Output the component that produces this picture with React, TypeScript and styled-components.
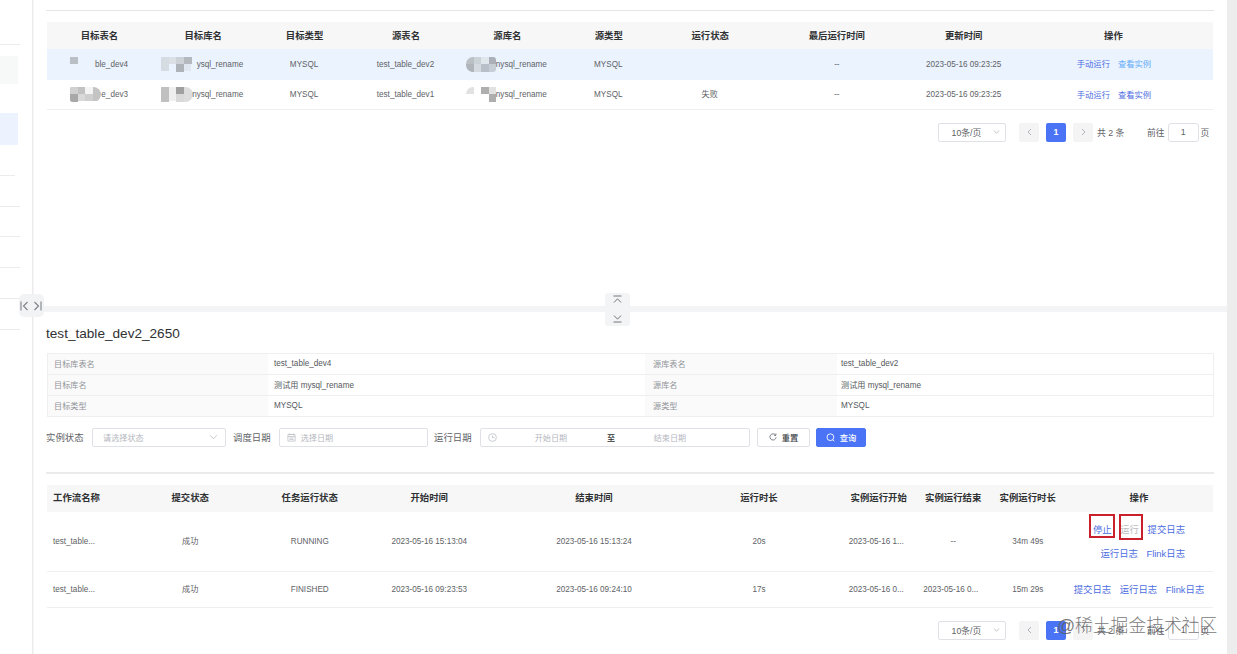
import React from "react";
import styled, { createGlobalStyle, css } from "styled-components";

const Global = createGlobalStyle`
  *, *::before, *::after { box-sizing: border-box; }
  body { margin: 0; background: #fff; overflow: hidden; }
  #root { font-family: "Liberation Sans", "Noto Sans CJK SC", sans-serif; font-size: 8.15px; color: #606266; }
`;

const Page = styled.div`
  position: relative;
  display: flex;
  width: 1237px;
  height: 654px;
  overflow: hidden;
`;
const Sidebar = styled.aside`
  flex: 0 0 32px;
  padding-top: 45px;
`;
const SideItem = styled.div<{ $h: number; $w?: number; $bg?: string; $mt?: number }>`
  height: ${(p) => p.$h}px;
  width: ${(p) => p.$w ?? 20}px;
  margin-top: ${(p) => p.$mt ?? 0}px;
  background: ${(p) => p.$bg ?? "transparent"};
  ${(p) => !p.$bg && css`border-bottom: 1px solid #ececee;`}
`;
const SideDivider = styled.div`
  flex: 0 0 2px;
  background: linear-gradient(90deg, #ebebed 50%, #f6f6f7 50%);
`;
const Main = styled.main`
  flex: 1;
  display: flex;
  flex-direction: column;
`;
const Gutter = styled.div`
  flex: 0 0 10px;
  background: #ededed;
`;
const TopPanel = styled.section`
  height: 306px;
  padding: 10px 13px 0 13px;
`;
const BottomPanel = styled.section`
  flex: 1;
  padding: 0 13px 0 13px;
`;
const Rule = styled.div<{ $h: number }>`
  height: ${(p) => p.$h}px;
  background: ${(p) => (p.$h > 1 ? "#ebebeb" : "#e4e5e6")};
  margin-left: -1px;
`;
const Splitter = styled.div`
  height: 6px;
  background: #f3f4f5;
`;
const SideHandle = styled.div`
  position: absolute;
  left: 19px;
  top: 294px;
  width: 25px;
  height: 23px;
  display: flex;
  align-items: center;
  justify-content: space-between;
  padding: 0 2px 0 1px;
  background: #f1f3f5;
  border-radius: 5px;
`;
const MidHandle = styled.div`
  position: absolute;
  left: 605px;
  top: 293px;
  width: 25px;
  height: 33px;
  display: flex;
  flex-direction: column;
  align-items: center;
  justify-content: space-between;
  padding: 2px 0 3px;
  background: #f3f4f5;
  border-radius: 3px;
`;

const Table = styled.div<{ $cols: string; $mt: number }>`
  display: grid;
  grid-template-columns: ${(p) => p.$cols};
  width: 1166px;
  margin-top: ${(p) => p.$mt}px;
`;
const Head = styled.div<{ $left?: boolean; $lift: number; $nudge?: number }>`
  height: 27px;
  display: flex;
  align-items: center;
  justify-content: ${(p) => (p.$left ? "flex-start" : "center")};
  padding: 0 ${(p) => p.$nudge ?? 0}px ${(p) => p.$lift}px ${(p) => (p.$left ? 6 : 0)}px;
  background: #f7f7f8;
  color: #303133;
  font-weight: 700;
  font-size: 9.4px;
  white-space: nowrap;
`;
const Cell = styled.div<{ $h: number; $active?: boolean; $left?: boolean; $nudge?: number; $lift?: number }>`
  height: ${(p) => p.$h}px;
  display: flex;
  align-items: center;
  justify-content: ${(p) => (p.$left ? "flex-start" : "center")};
  padding-left: ${(p) => (p.$left ? 6 : 0)}px;
  padding-right: ${(p) => p.$nudge ?? 0}px;
  padding-bottom: ${(p) => p.$lift ?? 0}px;
  background: ${(p) => (p.$active ? "#ebf3fe" : "#fff")};
  border-bottom: 1px solid ${(p) => (p.$active ? "#ebf3fe" : "#efeff1")};
  white-space: nowrap;
`;
const Clear = styled.span<{ $w: number }>`
  width: ${(p) => p.$w}px;
  display: flex;
  justify-content: flex-end;
`;
const Link = styled.a<{ $tone?: "hover" | "off" }>`
  color: ${(p) => (p.$tone === "hover" ? "#62acf8" : p.$tone === "off" ? "#b9bbc0" : "#4c6ce0")};
`;
const Links = styled.div<{ $size: number; $gap?: number }>`
  display: flex;
  gap: ${(p) => p.$gap ?? 8}px;
  font-size: ${(p) => p.$size}px;
`;
const StackedLinks = styled.div`
  display: flex;
  flex-direction: column;
  align-items: flex-end;
  gap: 3px;
  padding-bottom: 1px;
`;
const LinkLine = styled.div<{ $gap: number }>`
  height: 21px;
  display: flex;
  align-items: center;
  gap: ${(p) => p.$gap}px;
  font-size: 9.4px;
`;
const Marked = styled.span<{ $w: number; $h: number; $x: number }>`
  position: relative;
  &::after {
    content: "";
    position: absolute;
    left: ${(p) => p.$x}px;
    top: -8px;
    width: ${(p) => p.$w}px;
    height: ${(p) => p.$h}px;
    border: 2.5px solid #c9202c;
  }
`;

const Pager = styled.div<{ $mt: number }>`
  display: flex;
  align-items: center;
  width: 1166px;
  height: 20px;
  margin-top: ${(p) => p.$mt}px;
  padding-left: 891px;
  font-size: 8.8px;
  white-space: nowrap;
`;
const SizeSelect = styled.div`
  width: 68px;
  height: 19px;
  display: flex;
  align-items: center;
  justify-content: space-between;
  padding: 0 5px 0 12.5px;
  border: 1px solid #dfe1e6;
  border-radius: 2px;
  margin-right: 13px;
`;
const PageBtn = styled.div<{ $on?: boolean }>`
  width: 20px;
  height: 19px;
  margin-right: 7px;
  display: flex;
  align-items: center;
  justify-content: center;
  border-radius: 2px;
  background: ${(p) => (p.$on ? "#4a74f5" : "#f4f4f5")};
  color: #fff;
  font-weight: 700;
`;
const Total = styled.span`
  width: 50px;
  margin-left: -3px;
`;
const Jump = styled.div`
  width: 31px;
  height: 19px;
  margin: 0 2px 0 3px;
  display: flex;
  align-items: center;
  justify-content: center;
  border: 1px solid #dfe1e6;
  border-radius: 3px;
`;

const Title = styled.h2`
  margin: 0;
  padding-top: 13px;
  height: 41px;
  margin-left: -1px;
  font-size: 13.6px;
  line-height: 17px;
  font-weight: 400;
  color: #303133;
`;
const Info = styled.div`
  display: grid;
  grid-template-columns: 220px 377px 192px 376px;
  width: 1167px;
  border: 1px solid #efeff1;
  border-bottom: 0;
`;
const InfoCell = styled.div<{ $label?: boolean; $pl: number }>`
  height: 21px;
  display: flex;
  align-items: center;
  padding-left: ${(p) => p.$pl}px;
  padding-bottom: 2px;
  background: ${(p) => (p.$label ? "#fafafa" : "#fff")};
  color: ${(p) => (p.$label ? "#909399" : "#55585d")};
  border-bottom: 1px solid #efeff1;
`;
const Filters = styled.div`
  display: flex;
  align-items: center;
  height: 19px;
  margin: 11px 0 25px -1px;
  white-space: nowrap;
`;
const FieldLabel = styled.label<{ $w: number }>`
  width: ${(p) => p.$w}px;
  padding-bottom: 2px;
  font-size: 9.4px;
`;
const Field = styled.div<{ $w: number; $mr: number; $pl: number }>`
  width: ${(p) => p.$w}px;
  height: 19px;
  margin-right: ${(p) => p.$mr}px;
  padding: 0 7px 1px ${(p) => p.$pl}px;
  display: flex;
  align-items: center;
  border: 1px solid #dfe1e6;
  border-radius: 2px;
  color: #b4b7be;
  svg { flex: none; }
`;
const Grow = styled.span`
  flex: 1;
`;
const RangePart = styled.span<{ $w: number; $dark?: boolean }>`
  width: ${(p) => p.$w}px;
  text-align: center;
  ${(p) => p.$dark && css`color: #303133; font-weight: 500;`}
`;
const Button = styled.button<{ $primary?: boolean; $w: number }>`
  width: ${(p) => p.$w}px;
  height: 19px;
  margin-right: 6px;
  padding: 0 0 1px;
  display: flex;
  align-items: center;
  justify-content: center;
  gap: 5px;
  font: 500 8.3px "Liberation Sans", "Noto Sans CJK SC", sans-serif;
  border-radius: 2px;
  border: 1px solid ${(p) => (p.$primary ? "#4a74f5" : "#dfe1e6")};
  background: ${(p) => (p.$primary ? "#4a74f5" : "#fff")};
  color: ${(p) => (p.$primary ? "#fff" : "#404247")};
`;
const Watermark = styled.div`
  position: absolute;
  left: 1057px;
  top: 614px;
  font: 300 17.8px/24px "Liberation Sans", "Noto Sans CJK SC", sans-serif;
  color: rgba(95, 95, 98, 0.85);
  white-space: nowrap;
`;

const Stroke = ({ d, w, h, color = "#b4b7be", sw = 1 }: { d: string; w: number; h: number; color?: string; sw?: number }) => (
  <svg width={w} height={h} viewBox={`0 0 ${w} ${h}`} fill="none" stroke={color} strokeWidth={sw}>
    <path d={d} />
  </svg>
);

type Block = [number, number, number, number, string];
const MosaicBox = styled.svg<{ $r: string }>`
  flex: none;
  border-radius: ${(p) => p.$r};
`;
const Mosaic = ({ blocks, w, r = "0" }: { blocks: Block[]; w: number; r?: string }) => (
  <MosaicBox width={w} height={15} viewBox={`0 0 ${w} 15`} $r={r}>
    {blocks.map(([x, y, bw, bh, c], i) => (
      <rect key={i} x={x} y={y} width={bw} height={bh} fill={c} />
    ))}
  </MosaicBox>
);

const masks: Record<string, { w: number; r?: string; blocks: Block[] }> = {
  a1: { w: 22, blocks: [[0, 0, 8, 7, "#b9bfc5"]] },
  b1: { w: 32, blocks: [[0, 0, 8, 14, "#d6dce2"], [8, 0, 7, 7, "#dae0e6"], [15, 0, 8, 7, "#ccd2d8"], [15, 7, 8, 8, "#adb3b9"], [23, 0, 8, 7, "#b3b9bf"], [23, 7, 7, 7, "#e0e7ee"]] },
  c1: { w: 30, r: "7px 3px 3px 7px", blocks: [[0, 0, 8, 7, "#bbc0c5"], [0, 7, 8, 8, "#b0b5bb"], [8, 0, 7, 7, "#ccd3d7"], [8, 7, 7, 8, "#d4dae0"], [15, 0, 8, 7, "#dfe6ec"], [15, 7, 8, 8, "#b9bfc8"], [23, 0, 7, 7, "#abb0b8"], [23, 7, 7, 8, "#c8ced5"]] },
  a2: { w: 31, r: "2px 12px 12px 4px", blocks: [[0, 0, 8, 7, "#d0d0d0"], [0, 7, 8, 8, "#a8a8a8"], [8, 0, 7, 7, "#c2c2c2"], [8, 7, 7, 7, "#d9d9d9"], [15, 0, 8, 7, "#f5f5f5"], [15, 7, 8, 7, "#cfcfcf"], [23, 0, 8, 14, "#c4c4c4"]] },
  b2: { w: 32, r: "0 8px 8px 0", blocks: [[0, 0, 8, 15, "#c0c0c0"], [8, 0, 7, 14, "#efefef"], [15, 0, 8, 7, "#a0a0a0"], [15, 7, 8, 8, "#d9d9d9"], [23, 0, 9, 15, "#dddddd"]] },
  c2: { w: 30, r: "7px 0 0 0", blocks: [[0, 0, 8, 7, "#e2e2e2"], [15, 0, 8, 7, "#afafaf"], [23, 0, 7, 7, "#e2e2e2"], [23, 7, 7, 8, "#aeaeae"]] },
};
const Masked = ({ id, w, children }: { id: string; w: number; children: string }) => (
  <>
    <Mosaic {...masks[id]} />
    <Clear $w={w}>{children}</Clear>
  </>
);

const topHeads = ["目标表名", "目标库名", "目标类型", "源表名", "源库名", "源类型", "运行状态", "最后运行时间", "更新时间", "操作"];
const topRows = [
  { k: "1", active: true, name: "ble_dev4", nw: 36, db: "ysql_rename", src: "test_table_dev2", state: "" },
  { k: "2", active: false, name: "e_dev3", nw: 27, db: "nysql_rename", src: "test_table_dev1", state: "失败" },
];
const bottomHeads = ["工作流名称", "提交状态", "任务运行状态", "开始时间", "结束时间", "运行时长", "实例运行开始", "实例运行结束", "实例运行时长", "操作"];
const bottomRows = [
  ["test_table...", "成功", "RUNNING", "2023-05-16 15:13:04", "2023-05-16 15:13:24", "20s", "2023-05-16 1...", "--", "34m 49s"],
  ["test_table...", "成功", "FINISHED", "2023-05-16 09:23:53", "2023-05-16 09:24:10", "17s", "2023-05-16 0...", "2023-05-16 0...", "15m 29s"],
];
const info = [
  ["目标库表名", "test_table_dev4", "源库表名", "test_table_dev2"],
  ["目标库名", "测试用 mysql_rename", "源库名", "测试用 mysql_rename"],
  ["目标类型", "MYSQL", "源类型", "MYSQL"],
];

const Pagination = ({ mt }: { mt: number }) => (
  <Pager $mt={mt}>
    <SizeSelect>
      10条/页
      <Stroke w={7} h={6} d="M1 1.5 3.5 4.3 6 1.5" sw={0.8} />
    </SizeSelect>
    <PageBtn><Stroke w={5} h={8} d="M4 1 1 4 4 7" color="#b0b3b9" /></PageBtn>
    <PageBtn $on>1</PageBtn>
    <PageBtn><Stroke w={5} h={8} d="M1 1 4 4 1 7" color="#b0b3b9" /></PageBtn>
    <Total>共 2 条</Total>
    前往
    <Jump>1</Jump>
    页
  </Pager>
);

export default function App() {
  return (
    <Page>
      <Global />
      <Sidebar>
        <SideItem $h={1} $mt={-1} />
        <SideItem $h={28} $w={18} $mt={11} $bg="#f7f8f8" />
        <SideItem $h={32} $w={18} $mt={29} $bg="#ecf2fe" />
        <SideItem $h={31} $w={15} />
        {[31, 30, 31, 31, 31].map((h, i) => <SideItem key={i} $h={h} />)}
      </Sidebar>
      <SideDivider />
      <Main>
        <TopPanel>
          <Rule $h={1} />
          <Table $mt={11} $cols="106px repeat(6, 101.4px) 152px 101.6px 198px">
            {topHeads.map((h) => <Head key={h} $lift={2} $nudge={1}>{h}</Head>)}
            {topRows.map((r) => {
              const c = { $h: r.active ? 31 : 30, $active: r.active };
              return (
                <React.Fragment key={r.k}>
                  <Cell {...c} $nudge={2}><Masked id={"a" + r.k} w={r.nw}>{r.name}</Masked></Cell>
                  <Cell {...c} $nudge={3}><Masked id={"b" + r.k} w={50}>{r.db}</Masked></Cell>
                  <Cell {...c} $nudge={2}>MYSQL</Cell>
                  <Cell {...c} $nudge={2}>{r.src}</Cell>
                  <Cell {...c} $nudge={3}><Masked id={"c" + r.k} w={51}>nysql_rename</Masked></Cell>
                  <Cell {...c} $nudge={2}>MYSQL</Cell>
                  <Cell {...c} $nudge={2} $lift={2}>{r.state}</Cell>
                  <Cell {...c} $nudge={1}>--</Cell>
                  <Cell {...c} $nudge={1}>2023-05-16 09:23:25</Cell>
                  <Cell {...c} $lift={2}>
                    <Links $size={8.3}>
                      <Link>手动运行</Link>
                      <Link $tone={r.active ? "hover" : undefined}>查看实例</Link>
                    </Links>
                  </Cell>
                </React.Fragment>
              );
            })}
          </Table>
          <Pagination mt={12} />
        </TopPanel>
        <Splitter />
        <BottomPanel>
          <Title>test_table_dev2_2650</Title>
          <Info>
            {info.map((row) => row.map((t, i) => (
              <InfoCell key={i} $label={i % 2 === 0} $pl={[6, 6, 8, 4][i]}>{t}</InfoCell>
            )))}
          </Info>
          <Filters>
            <FieldLabel $w={46}>实例状态</FieldLabel>
            <Field $w={134} $mr={7} $pl={10}>
              请选择状态<Grow />
              <Stroke w={9} h={6} d="M1 1.2 4.5 4.8 8 1.2" sw={0.8} />
            </Field>
            <FieldLabel $w={46}>调度日期</FieldLabel>
            <Field $w={149} $mr={6} $pl={7}>
              <Stroke w={9} h={9} d="M.9 1.5h7.2v6.6H.9zM.9 3.6h7.2M2.7.3v2M6.3.3v2M2.5 5h4M2.5 6.5h4" sw={0.7} />
              <RangePart $w={42}>选择日期</RangePart>
            </Field>
            <FieldLabel $w={46}>运行日期</FieldLabel>
            <Field $w={270} $mr={7} $pl={7}>
              <Stroke w={9} h={9} d="M4.5.6a3.9 3.9 0 1 0 0 7.8 3.9 3.9 0 0 0 0-7.8M4.5 2.3v2.4h2" sw={0.7} />
              <RangePart $w={108}>开始日期</RangePart>
              <RangePart $w={12} $dark>至</RangePart>
              <RangePart $w={106}>结束日期</RangePart>
            </Field>
            <Button $w={53}>
              <Stroke w={8} h={8} color="#606266" sw={0.8} d="M6.6 2.2A3.1 3.1 0 1 0 7.1 4.3M6.9.6v1.8H5.1" />
              重置
            </Button>
            <Button $w={50} $primary>
              <Stroke w={9} h={9} color="#fff" sw={0.9} d="M4.4.8a3.4 3.4 0 1 0 0 6.8 3.4 3.4 0 0 0 0-6.8M6.8 6.7 8.3 8.3" />
              查询
            </Button>
          </Filters>
          <Rule $h={2} />
          <Table $mt={11} $cols="61px 164.5px 74.5px 164.5px 165px 165px 74.5px 74.5px 74.5px 148px">
            {bottomHeads.map((h, i) => <Head key={h} $lift={3} $left={i === 0}>{h}</Head>)}
            {bottomRows.map((row, r) => (
              <React.Fragment key={r}>
                {row.map((t, i) => (
                  <Cell key={i} $h={r ? 36 : 60} $left={i === 0} $lift={i === 1 ? 2 : 0} $nudge={i === 6 || (i === 7 && r === 1) ? 5 : 0}>{t}</Cell>
                ))}
                <Cell $h={r ? 36 : 60} $lift={r ? 2 : 1}>
                  {r ? (
                    <Links $size={9.4} $gap={8.5}>
                      <Link>提交日志</Link>
                      <Link>运行日志</Link>
                      <Link>Flink日志</Link>
                    </Links>
                  ) : (
                    <StackedLinks>
                      <LinkLine $gap={8.5}>
                        <Marked $x={-4} $w={26} $h={24}><Link>停止</Link></Marked>
                        <Marked $x={-1.5} $w={24} $h={26}><Link $tone="off">运行</Link></Marked>
                        <Link>提交日志</Link>
                      </LinkLine>
                      <LinkLine $gap={8.5}>
                        <Link>运行日志</Link>
                        <Link>Flink日志</Link>
                      </LinkLine>
                    </StackedLinks>
                  )}
                </Cell>
              </React.Fragment>
            ))}
          </Table>
          <Pagination mt={12} />
        </BottomPanel>
      </Main>
      <Gutter />
      <SideHandle>
        <Stroke w={9} h={10} color="#7e8187" d="M1 .5v9M7.5 1 3.5 5l4 4" sw={1.1} />
        <Stroke w={9} h={10} color="#7e8187" d="M8 .5v9M1.5 1l4 4-4 4" sw={1.1} />
      </SideHandle>
      <MidHandle>
        <Stroke w={9} h={9} color="#74777d" d="M.5 1h8M1 7.5 4.5 3.8 8 7.5" />
        <Stroke w={9} h={9} color="#74777d" d="M.5 8h8M1 1.5 4.5 5.2 8 1.5" />
      </MidHandle>
      <Watermark>@稀土掘金技术社区</Watermark>
    </Page>
  );
}
